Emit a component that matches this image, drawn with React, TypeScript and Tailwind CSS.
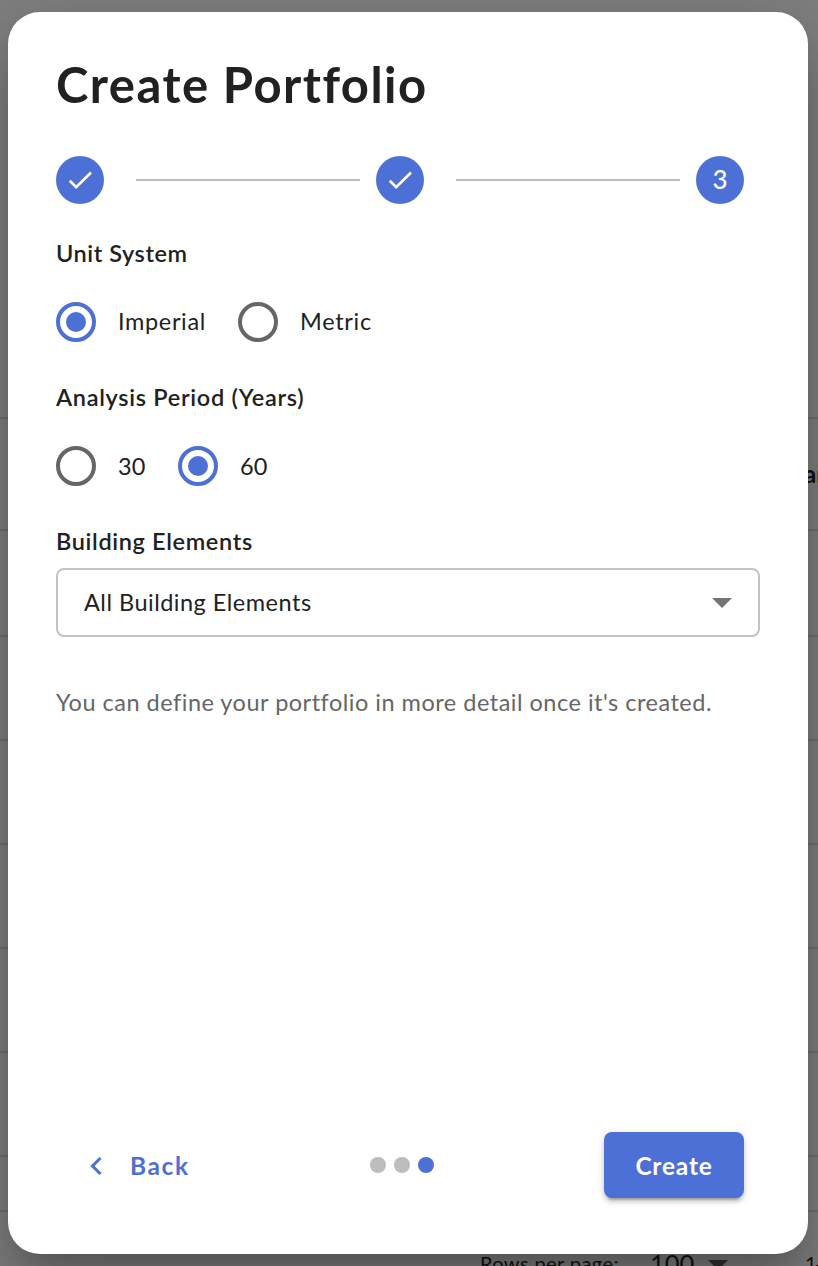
import React from "react";

function StepDone() {
  return (
    <div className="flex size-12 shrink-0 items-center justify-center rounded-full bg-[#4d70d6]">
      <svg viewBox="0 0 48 48" className="size-12" fill="none" stroke="#fff" strokeWidth="2.7">
        <path d="M13.8 24.8 L20.2 31.2 L35 16.5" />
      </svg>
    </div>
  );
}

function Radio({ checked }: { checked?: boolean }) {
  return checked ? (
    <span className="flex size-10 items-center justify-center rounded-full border-4 border-[#4d70d6]">
      <span className="size-5 rounded-full bg-[#4d70d6]" />
    </span>
  ) : (
    <span className="size-10 rounded-full border-4 border-[#666666]" />
  );
}

const line = "shrink-0 border-b-2 border-[#707070]";

function Backdrop() {
  return (
    <div className="absolute inset-0 flex flex-col bg-[#808080] text-[#111]">
      <div className={`${line} h-[419px]`} />
      <div className={`${line} flex h-[112px] justify-end overflow-hidden`}>
        <span className="w-[14px] pt-[39px] text-[24px] font-bold leading-8">ar</span>
      </div>
      <div className={`${line} h-[106px]`} />
      <div className={`${line} h-[104px]`} />
      <div className={`${line} h-[104px]`} />
      <div className={`${line} h-[104px]`} />
      <div className={`${line} h-[104px]`} />
      <div className={`${line} h-[104px]`} />
      <div className={`${line} h-[55px]`} />
      <div className="flex h-[54px] shrink-0 overflow-hidden pl-[480px] pt-[35px] leading-8">
        <span className="w-[170px] shrink-0 text-[20px] tracking-[0.4px]">Rows per page:</span>
        <span className="w-[58px] shrink-0 text-[25.5px]">100</span>
        <svg viewBox="0 0 20 10" className="mt-[13px] h-[10px] w-5 shrink-0" fill="#333">
          <path d="M0 0H20L10 10Z" />
        </svg>
        <span className="ml-[77px] shrink-0 text-[20px] tracking-[-1.5px]">1-</span>
      </div>
    </div>
  );
}

export default function App() {
  return (
    <div className="relative h-[1266px] w-[818px] overflow-hidden font-['Lato',sans-serif] text-[#212121]">
      <Backdrop />
      <div className="relative ml-2 mt-3 flex h-[1242px] w-[800px] flex-col rounded-[32px] bg-white px-12 shadow-[0_22px_30px_-14px_rgba(0,0,0,0.2),0_48px_76px_6px_rgba(0,0,0,0.14),0_18px_92px_16px_rgba(0,0,0,0.12)]">
        <h1 className="mt-[40px] h-16 whitespace-nowrap text-[49px] font-bold leading-[64px] tracking-[1.45px]">
          Create Portfolio
        </h1>

        <div className="mt-[40px] flex h-12 w-[688px] items-center">
          <StepDone />
          <div className="ml-8 mr-4 h-0.5 flex-1 bg-[#bdbdbd]" />
          <StepDone />
          <div className="ml-8 mr-4 h-0.5 flex-1 bg-[#bdbdbd]" />
          <div className="flex size-12 items-center justify-center rounded-full bg-[#4d70d6] pb-0.5 text-[26px] font-medium leading-none text-white">
            3
          </div>
        </div>

        <div className="mt-[33px] h-8 text-[23.5px] font-semibold leading-8 tracking-[0.55px]">Unit System</div>
        <div className="mt-[33px] flex h-10 items-center text-[23.5px] leading-8">
          <Radio checked />
          <span className="ml-[22px] w-[120px] pb-0.5 tracking-[0.65px]">Imperial</span>
          <Radio />
          <span className="ml-[22px] pb-0.5 tracking-[0.7px]">Metric</span>
        </div>

        <div className="mt-[39px] h-8 text-[23.5px] font-semibold leading-8 tracking-[0.7px]">Analysis Period (Years)</div>
        <div className="mt-[33px] flex h-10 items-center text-[23.5px] leading-8">
          <Radio />
          <span className="ml-[22px] w-[60px]">30</span>
          <Radio checked />
          <span className="ml-[22px]">60</span>
        </div>

        <div className="mt-[39px] h-8 text-[23.5px] font-semibold leading-8 tracking-[0.65px]">Building Elements</div>
        <div className="mt-[11px] flex h-[69px] w-[704px] items-center justify-between rounded-lg border-2 border-[#c4c4c4] px-[26px] text-[23.5px] leading-8">
          <span className="pb-0.5 tracking-[0.5px]">All Building Elements</span>
          <svg viewBox="0 0 20 10" className="h-[10px] w-5" fill="#757575">
            <path d="M0 0H20L10 10Z" />
          </svg>
        </div>

        <p className="mt-[49px] h-8 whitespace-nowrap text-[23.5px] leading-8 tracking-[0.5px] text-[#666666]">
          You can define your portfolio in more detail once it's created.
        </p>

        <div className="mb-14 mt-auto flex h-[66px] w-[688px] items-center text-[24.5px] font-bold leading-8">
          <button className="flex w-[314px] items-center pl-[34px] pt-0.5 text-[#4d70d6]">
            <svg viewBox="0 0 12 18" className="h-[18px] w-3" fill="none" stroke="currentColor" strokeWidth="3">
              <path d="M10.5 1 L2.5 9 L10.5 17" />
            </svg>
            <span className="ml-[28px] tracking-[1.6px]">Back</span>
          </button>
          <div className="flex gap-2">
            <span className="size-4 rounded-full bg-[#bdbdbd]" />
            <span className="size-4 rounded-full bg-[#bdbdbd]" />
            <span className="size-4 rounded-full bg-[#4d70d6]" />
          </div>
          <button className="ml-auto h-[66px] w-[140px] rounded-lg bg-[#4d70d6] pt-0.5 tracking-[0.8px] text-white shadow-[0_6px_2px_-4px_rgba(0,0,0,0.2),0_4px_4px_0_rgba(0,0,0,0.14),0_2px_10px_0_rgba(0,0,0,0.12)]">
            Create
          </button>
        </div>
      </div>
    </div>
  );
}
